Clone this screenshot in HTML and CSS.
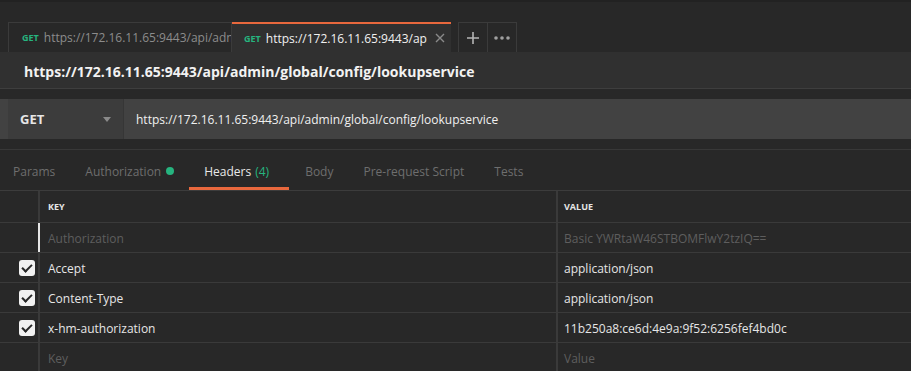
FILE: index.html
```html
<!doctype html>
<html>
	<head>
		<title>Postman - lookupservice</title>
		<link rel="stylesheet" href="styles.css">
	</head>
	<body>
		<div class="topstrip"></div>

		<nav class="tabbar">
			<div class="tab">
				<span class="verb">GET</span>
				<span class="tab-url">https://172.16.11.65:9443/api/admin</span>
			</div>
			<div class="tab active">
				<span class="verb">GET</span>
				<span class="tab-url">https://172.16.11.65:9443/api/admin</span>
				<svg class="close" width="12" height="12" viewBox="0 0 12 12"><path d="M2 2L10 10M10 2L2 10" stroke="#8a8a8a" stroke-width="1.4"/></svg>
			</div>
			<div class="tab-btn first">
				<svg width="14" height="14" viewBox="0 0 14 14"><path d="M7 1V13M1 7H13" stroke="#b5b5b5" stroke-width="1.6"/></svg>
			</div>
			<div class="tab-btn">
				<svg width="16" height="4" viewBox="0 0 16 4"><circle cx="2" cy="2" r="1.8" fill="#a0a0a0"/><circle cx="8" cy="2" r="1.8" fill="#a0a0a0"/><circle cx="14" cy="2" r="1.8" fill="#a0a0a0"/></svg>
			</div>
		</nav>

		<header class="titlebar">https://172.16.11.65:9443/api/admin/global/config/lookupservice</header>

		<section class="urlbar">
			<div class="method">
				<span>GET</span>
				<svg width="8" height="5" viewBox="0 0 8 5"><path d="M0 0H8L4 5Z" fill="#8a8a8a"/></svg>
			</div>
			<div class="url">https://172.16.11.65:9443/api/admin/global/config/lookupservice</div>
		</section>

		<nav class="reqtabs">
			<span class="reqtab">Params</span>
			<span class="reqtab">Authorization <i class="dot"></i></span>
			<span class="reqtab on">Headers <em>(4)</em></span>
			<span class="reqtab">Body</span>
			<span class="reqtab">Pre-request Script</span>
			<span class="reqtab">Tests</span>
		</nav>

		<div class="table">
			<div class="row head">
				<div class="check"></div>
				<div class="key">KEY</div>
				<div class="value">VALUE</div>
			</div>
			<div class="row muted">
				<div class="check"></div>
				<div class="key focus">Authorization</div>
				<div class="value">Basic YWRtaW46STBOMFlwY2tzIQ==</div>
			</div>
			<div class="row">
				<div class="check"><span class="box"></span></div>
				<div class="key">Accept</div>
				<div class="value">application/json</div>
			</div>
			<div class="row">
				<div class="check"><span class="box"></span></div>
				<div class="key">Content-Type</div>
				<div class="value">application/json</div>
			</div>
			<div class="row">
				<div class="check"><span class="box"></span></div>
				<div class="key">x-hm-authorization</div>
				<div class="value">11b250a8:ce6d:4e9a:9f52:6256fef4bd0c</div>
			</div>
			<div class="row muted">
				<div class="check"></div>
				<div class="key">Key</div>
				<div class="value">Value</div>
			</div>
		</div>
	</body>
</html>
```

FILE: styles.css
```css
body {
	margin: 0;
	background: #282828;
	color: #e6e6e6;
	font-family: "Open Sans", "Noto Sans", sans-serif;
	font-size: 12px;
	overflow: hidden;
}

	.topstrip {
		height: 2px;
		background: #222;
	}

	.tabbar {
		display: flex;
		height: 30px;
		margin-top: 20px;
		padding-left: 8px;
	}

	.tab {
		display: flex;
		align-items: center;
		box-sizing: border-box;
		width: 224px;
		padding: 0 0 0 13px;
		border: 1px solid #3b3b3b;
		border-bottom: none;
		white-space: nowrap;
		overflow: hidden;
		color: #8c8c8c;
	}

	.tab.active {
		width: 219px;
		padding-left: 12px;
		background: #303030;
		border: none;
		border-top: 2px solid #e8683d;
		color: #f0f0f0;
	}

	.tab-url {
		overflow: hidden;
		flex: 1;
	}

	.tab.active .tab-url {
		flex: 0 0 161px;
	}

	.verb {
		color: #26b47f;
		font-size: 9px;
		font-weight: 700;
		margin-right: 5px;
	}

	.close {
		margin-left: 7px;
	}

	.tab-btn {
		display: flex;
		align-items: center;
		justify-content: center;
		box-sizing: border-box;
		width: 30px;
		border: 1px solid #3b3b3b;
		border-bottom: none;
	}

	.tab-btn.first {
		margin-left: 7px;
	}

	.tab-btn + .tab-btn {
		border-left: none;
		width: 29px;
	}

	.titlebar {
		height: 33px;
		line-height: 33px;
		padding: 3px 0 0 24px;
		background: #303030;
		border-bottom: 1px solid #3e3e3e;
		font-size: 14px;
		font-weight: 700;
		color: #f2f2f2;
	}

	.urlbar {
		display: flex;
		height: 40px;
		margin-top: 10px;
		padding-left: 8px;
		background: #424242;
	}

	.method {
		display: flex;
		align-items: center;
		justify-content: space-between;
		box-sizing: border-box;
		width: 116px;
		padding: 0 12px 0 12px;
		background: #3c3c3c;
		border-right: 1px solid #363636;
		font-weight: 700;
		font-size: 13px;
	}

	.url {
		display: flex;
		align-items: center;
		padding-left: 12px;
		color: #f0f0f0;
	}

	.reqtabs {
		display: flex;
		height: 40px;
		margin-top: 10px;
		border-top: 1px solid #383838;
		border-bottom: 1px solid #3c3c3c;
		padding-left: 13px;
		gap: 30px;
	}

	.reqtab {
		display: flex;
		align-items: center;
		color: #6e6e6e;
		box-sizing: border-box;
		border-bottom: 3px solid transparent;
		padding-top: 5px;
	}

	.reqtab.on {
		color: #e8e8e8;
		border-bottom-color: #e8683d;
		padding: 5px 20px 0 15px;
		margin: 0 -14px 0 -15px;
	}

	.reqtab em {
		font-style: normal;
		color: #26b47f;
		margin-left: 4px;
	}

	.dot {
		display: inline-block;
		width: 8px;
		height: 8px;
		border-radius: 50%;
		background: #26b47f;
		margin-left: 5px;
	}

	.row {
		display: flex;
		height: 29px;
		border-bottom: 1px solid #3a3a3a;
	}

	.row.head {
		height: 31px;
		font-size: 9px;
		font-weight: 700;
	}

	.check {
		display: flex;
		align-items: center;
		justify-content: center;
		width: 38px;
		padding-left: 16px;
		box-sizing: border-box;
	}

	.key, .value {
		display: flex;
		align-items: center;
		border-left: 2px solid #3a3a3a;
		padding-left: 8px;
	}

	.row + .row .key, .row + .row .value {
		padding-top: 2px;
	}

	.key {
		width: 508px;
	}

	.value {
		flex: 1;
		padding-left: 6px;
	}

	.row.muted {
		color: #5e5e5e;
	}

	.key.focus {
		border-left-color: #e6e6e6;
	}

	.box {
		position: relative;
		width: 16px;
		height: 16px;
		border-radius: 3px;
		background: #f2f2f2;
	}

	.box:after {
		content: "";
		position: absolute;
		left: 5px;
		top: 2px;
		width: 4px;
		height: 8px;
		border: solid #282828;
		border-width: 0 2px 2px 0;
		transform: rotate(45deg);
	}
```
